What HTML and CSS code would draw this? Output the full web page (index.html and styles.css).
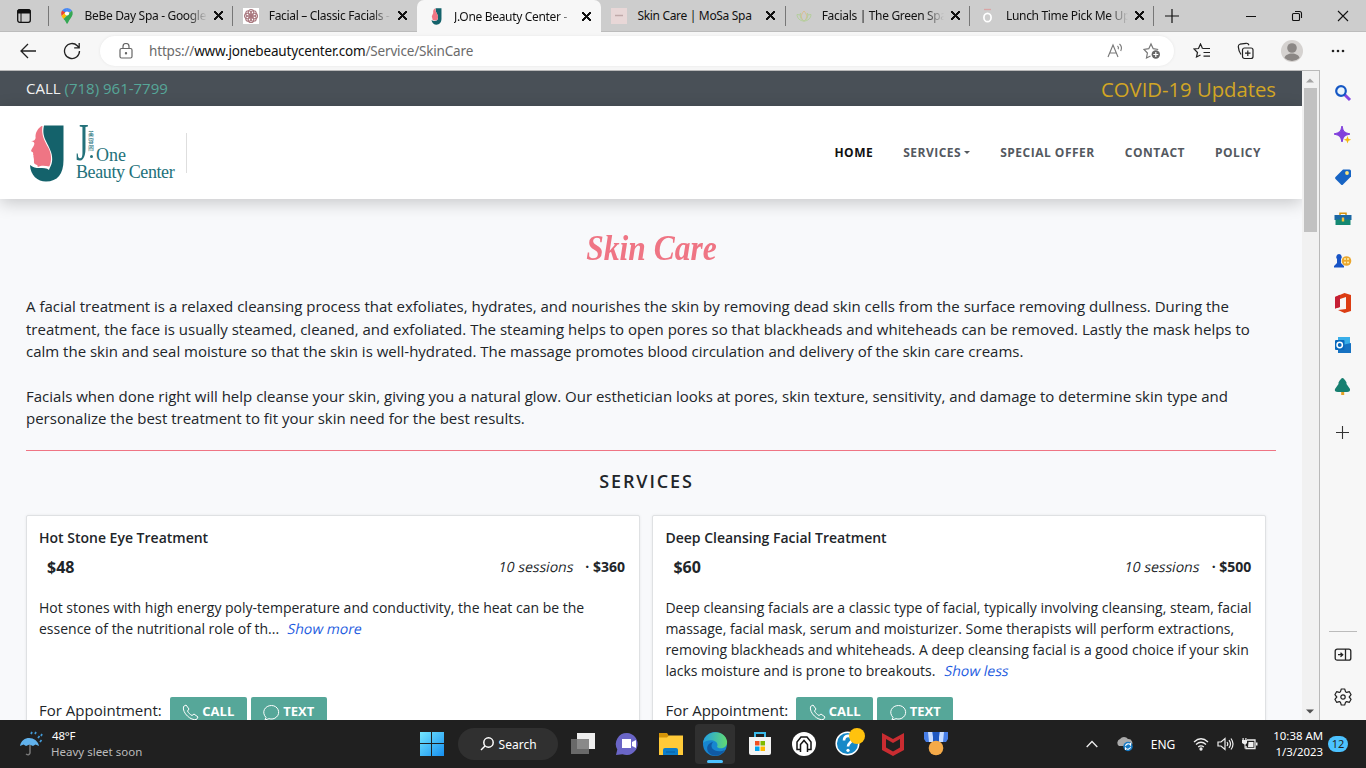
FILE: index.html
```html
<!DOCTYPE html>
<html lang="en">
<head>
<meta charset="utf-8">
<title>J.One Beauty Center - Skin Care</title>
<link rel="stylesheet" href="styles.css">
</head>
<body>
<header class="tabstrip">
  <div class="tab-menu"><svg width="14" height="14" viewBox="0 0 14 14"><rect x=".7" y=".7" width="12.6" height="12.6" rx="2" fill="none" stroke="#111" stroke-width="1.3"/><path d="M1 1h12v3H1zM4 4v9" stroke="#111" fill="#111"/></svg></div>
  <div class="tab"><span class="fav"><svg width="14" height="18" viewBox="0 0 14 18"><path d="M7 1a6 6 0 0 0-5 2.5L5 6z" fill="#4285f4"/><path d="M7 1a6 6 0 0 1 5 2.5L7 8 4.500 5.500z" fill="#4a8af4"/><path d="M2 3.500A6 6 0 0 0 1.500 9L5.500 5.500z" fill="#ea4335"/><path d="M1.500 9l2 3L10 5 6 5z" fill="#fbbc04"/><path d="M12 3.500c1.500 3 .5 5.500-1.500 8C8.500 14 8 16.500 7 17c-1-1-1-3-3.500-5z" fill="#34a853"/><circle cx="7" cy="6.500" r="2.100" fill="#fff"/></svg></span><span class="title">BeBe Day Spa - Google</span><span class="close"></span></div>
  <div class="tab"><span class="fav"><svg width="16" height="16" viewBox="0 0 16 16"><path d="M0 0h16v16H0z" fill="#fff"/><g fill="none" stroke="#a9787f" stroke-width="1.100"><circle cx="8" cy="4.300" r="2.800"/><circle cx="8" cy="11.700" r="2.800"/><circle cx="4.300" cy="8" r="2.800"/><circle cx="11.700" cy="8" r="2.800"/><circle cx="5.500" cy="5.500" r="2.800"/><circle cx="10.500" cy="5.500" r="2.800"/><circle cx="5.500" cy="10.500" r="2.800"/><circle cx="10.500" cy="10.500" r="2.800"/></g></svg></span><span class="title">Facial – Classic Facials -</span><span class="close"></span></div>
  <div class="tab active"><span class="fav"><svg width="11" height="17" viewBox="29 124 36 58"><path d="M44 125h20v36c0 13-7 20-17 20-8 0-16-5-17-16 4 3 10 4 18 2 6-6 5-14 2-20-4-8-7-14-6-22z" fill="#14626b"/><path d="M43 125c-8 4-8 12-7 16l-5 11 3 13c5 2 10 1 15 1 5-8 4-15 0-22s-6-10-6-19z" fill="#ef7584"/></svg></span><span class="title">J.One Beauty Center - </span><span class="close"></span></div>
  <div class="tab plain"><span class="fav"><svg width="16" height="16"><path d="M0 0h16v16H0z" fill="#e8d7d7"/><path d="M4 7.500h8" stroke="#c0a9a9" stroke-width="1.500"/></svg></span><span class="title full">Skin Care | MoSa Spa</span><span class="close"></span></div>
  <div class="tab"><span class="fav"><svg width="16" height="12" viewBox="0 0 16 12" fill="none" stroke="#b5cf9d"><path d="M8 1c-4 4-3 8 0 10 3-2 4-6 0-10z" stroke="#d9bf8f"/><path d="M4.500 3c-1 4 1 7 3.500 8 2.500-1 4.500-4 3.500-8M5 5L1 4.500C1 8 4 11 8 11s7-3 7-6.500L11 5"/></svg></span><span class="title">Facials | The Green Spa</span><span class="close"></span></div>
  <div class="tab"><span class="fav"><svg width="12" height="16"><path d="M2 1.500h7" stroke="#daa4a4" stroke-width="1.300"/><ellipse cx="5.500" cy="9.500" rx="3.600" ry="4.200" fill="none" stroke="#fff" stroke-width="1.700"/></svg></span><span class="title">Lunch Time Pick Me Up</span><span class="close"></span></div>
  <div class="newtab"><svg width="14" height="14"><path d="M7 0v14M0 7h14" stroke="#111" stroke-width="1.200"/></svg></div>
  <div class="winctl">
    <svg width="12" height="12"><path d="M1 6.500h10" stroke="#111"/></svg>
    <svg width="12" height="12" fill="none" stroke="#111" stroke-width="1.100"><rect x="1.500" y="3.500" width="7" height="7" rx="1"/><path d="M4 1.500h4.500a2 2 0 0 1 2 2V8"/></svg>
    <svg width="12" height="12"><path d="M1 1l10 10M11 1L1 11" stroke="#111" stroke-width="1.100"/></svg>
  </div>
</header>
<div class="toolbar">
  <div class="nav-btns">
    <svg width="18" height="16" fill="none" stroke="#222" stroke-width="1.300"><path d="M17 8H2M9 1L2 8l7 7"/></svg>
    <svg width="18" height="18" fill="none" stroke="#222" stroke-width="1.300"><path d="M16.500 9a7.500 7.500 0 1 1-2.200-5.300L16 5.500M16.200 1v4.800h-5"/></svg>
  </div>
  <div class="omnibox">
    <svg width="14" height="16" fill="none" stroke="#666" stroke-width="1.200"><rect x="1" y="5.500" width="12" height="9.500" rx="1.500"/><path d="M4 5V3.500a3 3 0 0 1 6 0V5"/><circle cx="7" cy="10.200" r=".6" fill="#555"/></svg>
    <span class="url">https://<b>www.jonebeautycenter.com</b>/Service/SkinCare</span>
    <svg class="read" width="17" height="16" fill="none" stroke="#777" stroke-width="1.100"><path d="M1 14L6 2l5 12M2.800 10h6.400M10.500 3c1 .8 1.200 2 .7 3.200M12.500 1c2 1.800 2.400 4.500 1.200 7"/></svg>
    <svg class="add" width="18" height="18" fill="none" stroke="#777" stroke-width="1.200"><path d="M7.500 14L3.500 16l.9-5L1 7.500l4.800-.8L8 2l2.200 4.700 5 .8"/><circle cx="12.800" cy="12.500" r="4.200" fill="#666" stroke="none"/><path d="M12.800 10v5M10.300 12.500h5" stroke="#fff"/></svg>
  </div>
  <div class="tools">
    <svg width="18" height="16" fill="none" stroke="#222" stroke-width="1.200"><path d="M9.500 5.500L7.500 1 5.500 5.500 1 6l3.500 3.500L3.500 14l4-2M9.500 5.500H17M10.500 9.500H17M10.500 13.200H17"/></svg>
    <svg width="18" height="18" fill="none" stroke="#222" stroke-width="1.200"><rect x="5.500" y="6" width="10.500" height="10.500" rx="2"/><path d="M10.800 8.500v5.500M8 11.200h5.500M4 12.500C1.500 9 1.500 7.500 1.300 4.500c0-1.500.7-2 1.700-2.300L9 1.300c2-.3 2.500.5 3 2"/></svg>
    <svg width="22" height="22"><circle cx="11" cy="11" r="11" fill="#d5d2d0"/><circle cx="11" cy="8" r="4.800" fill="#8b8785"/><path d="M3.500 18c1-6 14-6 15 0a11 11 0 0 1-15 0z" fill="#8b8785"/></svg>
    <svg class="more" width="14" height="4" fill="#222"><circle cx="2" cy="2" r="1.300"/><circle cx="7" cy="2" r="1.300"/><circle cx="12" cy="2" r="1.300"/></svg>
  </div>
</div>
<div class="window">
<main class="page">
  <div class="topbar"><div class="phone">CALL <span>(718) 961-7799</span></div><div class="covid">COVID-19 Updates</div></div>
  <div class="sitehead">
    <div class="brand">
      <svg class="mark" width="36" height="58" viewBox="29 124 36 58"><path d="M44 125.500h19.500V160c0 14-6 21.500-17.500 21.500-8.500 0-15.500-6-16-16.500 3 2.500 6 3 9 3 4 0 8 0 10 2 .5-2 3-5 3.200-10.500.2-7-3.200-12-6-18-2.500-5-3.700-9-2.200-16z" fill="#14626b"/><path d="M42.500 125.500c-4.500 2.500-7.500 7-6.900 12.500-.5 2-2 3.500-4.600 3 2.500.8 4 1.500 3.200 3.500-.4 2-3.200 5-3 6.500.2 1.200 2.200 1 2 2.200-.2 1-.2 1.200.3 2.300-.3 1 .2 2 .3 3 .5 2-.4 4.500 1 5.500 1.500 1 3 .5 3 3 3.500-2 7-1.500 11.500-.5 2.700-5.500 2.200-13-.8-18.500-4-7-7.500-13-6-22.500z" fill="#ef7584"/></svg>
      <div class="wordmark"><span class="wj">J</span><span class="cjk">美容阁</span><i class="dot"></i><span class="one">One</span><span class="bc">Beauty Center</span></div>
    </div>
    <nav class="menu"><a class="cur">HOME</a><a>SERVICES<i class="caret"></i></a><a>SPECIAL OFFER</a><a>CONTACT</a><a>POLICY</a></nav>
  </div>
  <section class="content">
    <h1><span>Skin Care</span></h1>
    <div class="copy"><p>A facial treatment is a relaxed cleansing process that exfoliates, hydrates, and nourishes the skin by removing dead skin cells from the surface removing dullness. During the<br>treatment, the face is usually steamed, cleaned, and exfoliated. The steaming helps to open pores so that blackheads and whiteheads can be removed. Lastly the mask helps to<br>calm the skin and seal moisture so that the skin is well-hydrated. The massage promotes blood circulation and delivery of the skin care creams.</p>
    <p>Facials when done right will help cleanse your skin, giving you a natural glow. Our esthetician looks at pores, skin texture, sensitivity, and damage to determine skin type and<br>personalize the best treatment to fit your skin need for the best results.</p></div>
    <h2>SERVICES</h2>
    <div class="cards">
      <article class="card"><h3>Hot Stone Eye Treatment</h3><div class="price"><strong>$48</strong><span><em>10 sessions</em> <b>·</b> <b>$360</b></span></div>
        <p>Hot stones with high energy poly-temperature and conductivity, the heat can be the<br>essence of the nutritional role of th...&nbsp; <a>Show more</a></p>
        <div class="appt">For Appointment: <button><svg width="17" height="17" viewBox="0 0 17 17"><path d="M1.500 2.500L4 1l3 4-1.500 2c1 2 2.500 3.500 4.500 4.500L12 10l4 3-1.500 2.500C9 17 0 9 1.500 2.500z"/></svg>CALL</button><button><svg width="17" height="17" viewBox="0 0 17 17"><path d="M3 13.500C-2 8 2 1.500 8.500 1.500S18 9 13.500 13c-2 2-5 2.500-7.500 1.700L2 16z"/></svg>TEXT</button></div></article>
      <article class="card"><h3>Deep Cleansing Facial Treatment</h3><div class="price"><strong>$60</strong><span><em>10 sessions</em> <b>·</b> <b>$500</b></span></div>
        <p>Deep cleansing facials are a classic type of facial, typically involving cleansing, steam, facial<br>massage, facial mask, serum and moisturizer. Some therapists will perform extractions,<br>removing blackheads and whiteheads. A deep cleansing facial is a good choice if your skin<br>lacks moisture and is prone to breakouts.&nbsp; <a>Show less</a></p>
        <div class="appt">For Appointment: <button><svg width="17" height="17" viewBox="0 0 17 17"><path d="M1.500 2.500L4 1l3 4-1.500 2c1 2 2.500 3.500 4.500 4.500L12 10l4 3-1.500 2.500C9 17 0 9 1.500 2.500z"/></svg>CALL</button><button><svg width="17" height="17" viewBox="0 0 17 17"><path d="M3 13.500C-2 8 2 1.500 8.500 1.500S18 9 13.500 13c-2 2-5 2.500-7.500 1.700L2 16z"/></svg>TEXT</button></div></article>
    </div>
  </section>
</main>
<div class="scrollbar"><svg width="8" height="5"><path d="M0 4.500h8L4 .5z" fill="#a3a3a3"/></svg><div class="thumb"></div><svg class="down" width="8" height="5"><path d="M0 .5h8L4 4.500z" fill="#505050"/></svg></div>
<aside class="side">
  <svg width="18" height="18"><path d="M10.500 10.500l5.500 5.500" stroke="#8445e0" stroke-width="3"/><circle cx="7" cy="7" r="4.800" fill="#eaf5fb" stroke="#1557c4" stroke-width="2.200"/></svg>
  <svg width="18" height="18"><path d="M8 0q1 5 2.500 5.800Q12 7 16 8q-4 1-5.500 2.200Q9 11.500 8 16q-1-4.500-2.500-5.800Q4 9 0 8q4-1 5.500-2.200Q7 5 8 0z" fill="#8140dc" stroke="#8140dc"/><path d="M13.500 10l1 2.700 2.700 1-2.700 1-1 2.700-1-2.700-2.700-1 2.700-1z" fill="#f5b90d"/></svg>
  <svg width="18" height="18"><path d="M9 1.500h6.500q1.500 0 1.500 1.500v5.500L9 16.500Q8 17.500 7 16.500L1.500 11Q.5 10 1.500 9z" fill="#1764c4"/><circle cx="13" cy="5" r="1.900" fill="#fbe47b"/></svg>
  <svg width="18" height="18"><path d="M6 5V3.200h6V5" fill="none" stroke="#d79512" stroke-width="1.500"/><path d="M.5 5h17v5H.5z" fill="#1b67a4"/><path d="M1.500 9.500h15V15h-15z" fill="#148872"/><path d="M7.800 7.500h2.400v4H7.800z" fill="#f5c33b"/></svg>
  <svg width="18" height="18"><circle cx="12.500" cy="9" r="4.800" fill="#eba72d"/><g fill="#fff0ad"><circle cx="11" cy="7" r="1"/><circle cx="14" cy="7" r="1"/><circle cx="11" cy="10.500" r="1"/><circle cx="14" cy="10.500" r="1"/></g><path d="M5 2a3 3 0 0 1 2 5v4l3 3v1.500H0V14l3-3V7a3 3 0 0 1 2-5z" fill="#1854c6"/></svg>
  <svg class="office" width="18" height="20"><path d="M10.500 0L17 2v16l-6.500 2L4 17l8-1V4L6 6v8l-5 1.500V4z" fill="#dc3d13"/><path d="M1 4l5-2.200V14L1 15.500z" fill="#c51f35"/></svg>
  <svg width="18" height="18"><path d="M4 1h12v9H4z" fill="#38aee9"/><path d="M4 10l13-3v10H4z" fill="#1672c2"/><rect x="1" y="4" width="9.500" height="10" rx="1" fill="#0868bc"/><circle cx="5.700" cy="9" r="2.700" fill="none" stroke="#fff" stroke-width="1.500"/></svg>
  <svg width="18" height="18"><path d="M7.200 13h3v4h-3z" fill="#e4a124"/><path d="M8.500 0q1.500 0 4 4.500v1.500l3.500 5q.5 3-3 3h-9q-4 0-3-3l3.500-5V4.500Q7 0 8.500 0z" fill="#177f70"/></svg>
  <svg class="plus" width="13" height="13"><path d="M6.500 0v13M0 6.500h13" stroke="#333" stroke-width="1.100"/></svg>
  <hr>
  <svg width="18" height="14" fill="none" stroke="#222" stroke-width="1.300"><rect x="1.200" y="1.200" width="15.600" height="11" rx="2"/><path d="M11.500 1v11M4 6.700h4.500M6.500 4.700l2.200 2-2.200 2"/></svg>
  <svg width="18" height="18" fill="none" stroke="#222" stroke-width="1.200"><path d="M7.300 1h3.400l.8 2.700 1.200.7 2.700-.7 1.700 3L15.200 9l1.900 2.300-1.700 3-2.700-.7-1.200.7-.8 2.700H7.300l-.8-2.700-1.200-.7-2.700.7-1.700-3L2.800 9 .9 6.700l1.700-3 2.700.7 1.200-.7z" stroke-linejoin="round"/><circle cx="9" cy="9" r="2.200"/></svg>
</aside>
</div>
<footer class="taskbar">
  <div class="weather"><svg width="26" height="26"><path d="M11 9v13q-1 3-4 1" fill="none" stroke="#777" stroke-width="1.500"/><path d="M1 15C3 4 18 5 20 15l-3.500-1.500L14 15l-3.500-1.500L7 15l-2.500-1.500z" fill="#61b2ec"/><path d="M12 3l1-2M16 3l1-2M19 7l1.500-2M22 5l1-2M21 11l1.500-2" stroke="#439bd8" stroke-width="1.700"/></svg><div><span class="deg">48°F</span><span class="wx">Heavy sleet soon</span></div></div>
  <div class="apps">
    <svg width="24" height="24"><defs><linearGradient id="win" x2="1" y2="1"><stop stop-color="#73e7ff"/><stop offset="1" stop-color="#168eef"/></linearGradient></defs><path d="M0 0h11v11H0zM12 0h12v11H12zM0 12h11v12H0zM12 12h12v12H12z" fill="url(#win)"/></svg>
    <div class="search"><svg width="14" height="14" fill="none" stroke="#fff" stroke-width="1.500"><circle cx="8.500" cy="5.500" r="4.700"/><path d="M5 9l-4 4"/></svg><span>Search</span></div>
    <svg width="26" height="24"><path d="M7 1h18v16H7z" fill="#eee"/><path d="M1 7h18v15H1z" fill="#777" opacity=".85"/></svg>
    <svg width="26" height="26"><path d="M13 2a11 11 0 1 1-4.500 21.200L2 24l1.300-5.500A11 11 0 0 1 13 2z" fill="#6a65c6"/><path d="M8 8h9v9H8zM18 11l4-2v8l-4-2z" fill="#fff"/></svg>
    <svg width="26" height="26"><path d="M1 2h8l2 3v4H1z" fill="#d49408"/><path d="M1 6.500h8l2-2h14V24H1z" fill="#ffca38"/><path d="M5 24v-5q0-2 2-2h11q2 0 2 2v5z" fill="#0c7dc9"/><path d="M8 21h9" stroke="#075e9f"/></svg>
    <div class="edge"><svg width="26" height="26"><defs><linearGradient id="eg" x2="1"><stop stop-color="#239fe2"/><stop offset="1" stop-color="#61da72"/></linearGradient></defs><circle cx="13" cy="13" r="12" fill="#1786d0"/><path d="M1 12C3-2 23-2 25 10c1 7-7 9-10 6 3-7-9-9-14-4z" fill="url(#eg)"/><path d="M11 11c-5 6 3 12 12 8-4 7-12 7-16 3-4-5-1-10 4-11z" fill="#105aa4"/></svg><i></i></div>
    <svg width="26" height="26"><path d="M8 7V2h10v5" fill="none" stroke="#39b9e9" stroke-width="2"/><path d="M2 6h22v16q0 2-2 2H4q-2 0-2-2z" fill="#f3f3f3"/><path d="M8 10h4.500v4.500H8z" fill="#f25022"/><path d="M13.500 10H18v4.500h-4.500z" fill="#7fba00"/><path d="M8 15.500h4.500V20H8z" fill="#00a4ef"/><path d="M13.500 15.500H18V20h-4.500z" fill="#ffb900"/></svg>
    <svg width="26" height="26"><circle cx="13" cy="13" r="12" fill="#fff"/><path d="M6 18.500h3.500v-5L13 9.500l3.500 4v5H20V11l-4-5h-6l-4 5zM9.500 18.500v2.500M16.500 18.500v2.500" fill="none" stroke="#151515" stroke-width="1.500"/></svg>
    <svg class="help" width="30" height="30"><circle cx="12.500" cy="15.500" r="11.300" fill="#1689c8" stroke="#fff" stroke-width="1.500"/><path d="M9 12.500c0-6 8-6 8-1 0 3-4 3-4 7" fill="none" stroke="#fff" stroke-width="2.600"/><circle cx="13" cy="22.300" r="1.600" fill="#fff"/><circle cx="22" cy="8" r="8" fill="#ffc20e"/></svg>
    <svg width="24" height="26"><path d="M1 2l11 6 11-6v17l-11 6-11-6zM5 8v8.500l7 4 7-4V8l-7 4z" fill="#c92c31" fill-rule="evenodd"/></svg>
    <svg width="26" height="26"><path d="M1 1h24v7l-2 3H3L1 8z" fill="#477ee7"/><path d="M5 1h4l2 10H6zM17 1h4l-1 10h-5z" fill="#c7dcff"/><path d="M10 1h6v10h-6z" fill="#1e58c2"/><circle cx="13" cy="17" r="7.300" fill="#f5aa48"/></svg>
  </div>
  <div class="tray">
    <svg width="12" height="8"><path d="M.7 7L6 1.500 11.300 7" fill="none" stroke="#eee" stroke-width="1.300"/></svg>
    <svg class="cloud" width="18" height="16"><path d="M3 10a4 4 0 0 1 1-7 5 5 0 0 1 8 0 4 4 0 0 1 3 7z" fill="#aaa"/><circle cx="12" cy="10.500" r="4.700" fill="#187bc5"/><path d="M9.500 10a2.800 2.800 0 0 1 5-1V7M14.500 11a2.800 2.800 0 0 1-5 1v2" fill="none" stroke="#fff" stroke-width="1.100"/></svg>
    <span class="lang">ENG</span>
    <svg width="16" height="14" fill="none" stroke="#eee" stroke-width="1.300"><path d="M1 5Q8-1.500 15 5M3 7.500q5-4.500 10 0M5.200 10q2.800-2.300 5.600 0"/><circle cx="8" cy="12" r="1" fill="#eee"/></svg>
    <svg width="17" height="14" fill="none" stroke="#eee" stroke-width="1.200"><path d="M1 5h3l4-3.500v11L4 9H1zM10 5q1.500 2 0 4M12 3.200q3 3.800 0 7.600M14 1.500q4 5.500 0 11"/></svg>
    <svg class="batt" width="17" height="14"><path d="M6 3h8v8.500H5V9" fill="none" stroke="#eee" stroke-width="1.300"/><path d="M7.500 5H12.500v5H7zM15 5.500h1.500v3H15zM1 3h5v3L4.500 7.500v4h-1v-4L1 6zM1.500 1h1.200v3H1.500zM4.300 1h1.200v3H4.300z" fill="#eee"/></svg>
    <div class="clock"><span>10:38 AM</span><span>1/3/2023</span></div>
    <div class="badge">12</div>
  </div>
</footer>
</body>
</html>
```
FILE: styles.css
```css
*{box-sizing:border-box}
body{margin:0;width:1366px;height:768px;overflow:hidden;display:flex;flex-direction:column;font-family:"Open Sans",sans-serif;color:#212529;white-space:nowrap}
svg{display:block;flex:none}
.tabstrip{height:32px;flex:none;display:flex;background:#cdcdcd;border-bottom:1px solid #bcbcbc;font:12px "Noto Sans",sans-serif;color:#111}
.tab-menu{width:47.500px;display:flex;align-items:center;justify-content:center}
.tab{width:184.300px;display:grid;grid-template-columns:37px 122px 1fr;align-items:center;position:relative}
.tab::before{content:"";position:absolute;left:0;top:6px;width:1px;height:20px;background:#777}
.tab.active::before,.plain::before{display:none}
.tab.active{background:#f7f7f7;border-radius:7px 7px 0 0;height:32px;margin-left:1px;margin-right:-1px}
.fav{display:flex;justify-content:center;padding-left:1px}
.title{letter-spacing:-.32px;mask-image:linear-gradient(90deg,#000 84%,transparent 100%)}
.title.full{mask-image:none}
.close{width:9px;height:9px;justify-self:start;margin-left:7px;background:linear-gradient(45deg,transparent 44%,#111 44%,#111 56%,transparent 56%),linear-gradient(-45deg,transparent 44%,#111 44%,#111 56%,transparent 56%)}
.active .close{margin-left:6px}
.newtab{width:37px;display:flex;align-items:center;justify-content:center;background:linear-gradient(#777,#777) 0 6px/1px 20px no-repeat}
.winctl{margin-left:auto;display:flex;gap:34px;align-items:center;padding-right:17px}
.toolbar{height:38px;flex:none;display:flex;align-items:center;background:#f7f7f7}
.nav-btns{width:100px;display:flex;align-items:center;gap:26px;padding-left:19px}
.omnibox{width:1074px;height:30px;border-radius:15px;background:#fff;display:flex;align-items:center;padding:0 13px 0 19px;box-shadow:0 0 3px #e6e6e6}
.url{font:13.500px "Noto Sans",sans-serif;letter-spacing:-.17px;color:#6b6b6b;margin-left:16px}
.url b{font-weight:400;color:#111}
.read{margin-left:auto;margin-right:19px}
.tools{display:flex;align-items:center;padding-left:19px;gap:26px}
.more{margin-left:2px}
.window{height:650px;flex:none;display:flex;overflow:hidden;background:#f7f7f7}
.page{width:1302px;height:650px;overflow:hidden;background:#f8f9fb;border-top:1px solid #b9b9b9}
.topbar{height:35px;background:#495057;display:flex;justify-content:space-between;align-items:center;padding:0 26px;color:#f1f1f1}
.phone{font-size:15px;padding-bottom:2px}
.phone span{color:#56a799}
.covid{font-size:20.250px;color:#d3a624}
.sitehead{height:93px;background:#fff;display:flex;justify-content:space-between;align-items:center;box-shadow:0 4px 16px #0003;position:relative;padding:0 41px 0 29px}
.brand{display:flex;align-items:center;width:158px;height:58px;position:relative}
.brand::after{content:"";position:absolute;right:0;top:9px;width:1px;height:40px;background:#dedede}
.wordmark{position:relative;width:105px;height:58px;margin-left:10px;font-family:"Liberation Serif",serif;color:#23717a}
.wordmark span,.dot{position:absolute}
.wj{font-size:52px;line-height:36px;left:1px;top:1px;transform:scaleX(.62);transform-origin:left}
.cjk{font:6px/7px "Noto Sans CJK SC",sans-serif;width:7px;white-space:normal;word-break:break-all;left:13px;top:6px}
.dot{width:3px;height:3px;border-radius:2px;background:#23717a;left:15px;top:31px}
.one{font-size:18px;left:21px;top:23px;line-height:16px}
.bc{font-size:18px;letter-spacing:-.4px;left:1px;top:40px;line-height:16px}
.menu{display:flex;gap:30px;font-size:12px;font-weight:700;letter-spacing:.5px;color:#54595f}
.menu .cur{color:#111}
.caret{display:inline-block;border:3px solid transparent;border-top-color:#54595f;border-bottom:0;margin-left:3px;vertical-align:3px}
.content{padding:0 26px}
h1{margin:0;text-align:center;height:96px;padding-top:30px;font:italic 700 35px/40px "Liberation Serif",serif;color:#ef7584}
h1 span{display:inline-block;transform:scaleX(.9)}
.copy{font-size:15px;line-height:22.500px;height:156px;border-bottom:1px solid #ef7584}
.copy p{margin:0 0 22px}
h2{font-size:18px;font-weight:600;line-height:24px;letter-spacing:1.850px;text-align:center;margin:18px 0 22px;padding-right:9px}
.cards{display:grid;grid-template-columns:614px 614px;gap:12.400px}
.card{height:240px;background:#fff;border:1px solid #dfe1e3;border-radius:2px;padding:11px 12px;box-shadow:0 0 3px #0001}
h3{margin:0;font-size:14px;font-weight:600;line-height:21px}
.price{display:flex;justify-content:space-between;align-items:center;height:37px;padding:0 2px 0 8px;font-size:14px}
.price strong{font-size:16px}
.price em,.card p a{font-style:normal;display:inline-block;transform:skewX(-12deg)}
.price em{margin-right:8px}
.card p{margin:12px 0 15px;font-size:14px;line-height:21px;height:84px}
.card p a{color:#1d5be0;margin-left:2px}
.appt{font-size:15px;display:flex;align-items:center;height:28px}
.appt button{font:700 13px "Open Sans",sans-serif;color:#fff;background:#56a799;border:0;border-radius:2px;height:28px;width:77px;display:flex;align-items:center;justify-content:center;gap:3px;padding:0;margin:2px 0 0 8px}
.appt button+button{margin-left:4px;width:76px}
.appt button svg{fill:none;stroke:#fff;stroke-width:1;margin-top:3px}
.scrollbar{width:18px;background:#f1f1f1;border-right:1px solid #b9b9b9;border-top:1px solid #b9b9b9;display:flex;flex-direction:column;align-items:center;padding:7px 1px 6px 0}
.thumb{width:13px;height:144px;background:#c1c1c1;margin-top:5px}
.down{margin-top:auto}
.side{width:46px;display:flex;flex-direction:column;align-items:center;gap:24px;padding-top:14px}
.side .office{margin:-1px 0}
.side .plus{margin:6px 1px 0 0}
.side hr{margin:auto 0 -8px;width:28px;border:0;border-top:1px solid #bbb}
.side svg:last-child{margin:2px 0 14px}
.taskbar{height:48px;flex:none;background:#202020;display:flex;align-items:center;color:#fff;font:12px "Noto Sans",sans-serif}
.weather{width:420px;padding-left:19px;display:flex;gap:6px;align-items:center;font-size:11.500px}
.weather div{display:flex;flex-direction:column;line-height:16px}
.deg{letter-spacing:-.2px;padding-left:1px}
.wx{color:#bbb}
.apps{display:flex;align-items:center;gap:18.100px}
.search{width:100px;height:32px;border-radius:16px;background:#303030;display:flex;align-items:center;justify-content:center;gap:5px;margin:0 -6px 0 -4px}
.edge{width:40px;height:40px;border-radius:4px;background:#303030;display:flex;flex-direction:column;align-items:center;padding-top:7px;margin:0 -7px}
.edge i{width:16px;height:3px;border-radius:2px;background:#4cc2ff;margin-top:3px}
.help{margin:-3px -2px 0 0}
.tray{margin-left:auto;display:flex;align-items:center;padding-right:18px}
.lang{margin:0 18px 0 17px}
.tray svg+svg{margin-left:8px}
.tray svg+.cloud{margin-left:18px}
.tray svg+.batt{margin-left:7px}
.clock{display:flex;flex-direction:column;text-align:right;font-size:11.400px;line-height:16px;margin-left:15px}
.badge{width:20px;height:16px;border-radius:8px;background:#4cc2ff;color:#222;font-size:11px;line-height:16px;text-align:center;margin-left:5px}
```
